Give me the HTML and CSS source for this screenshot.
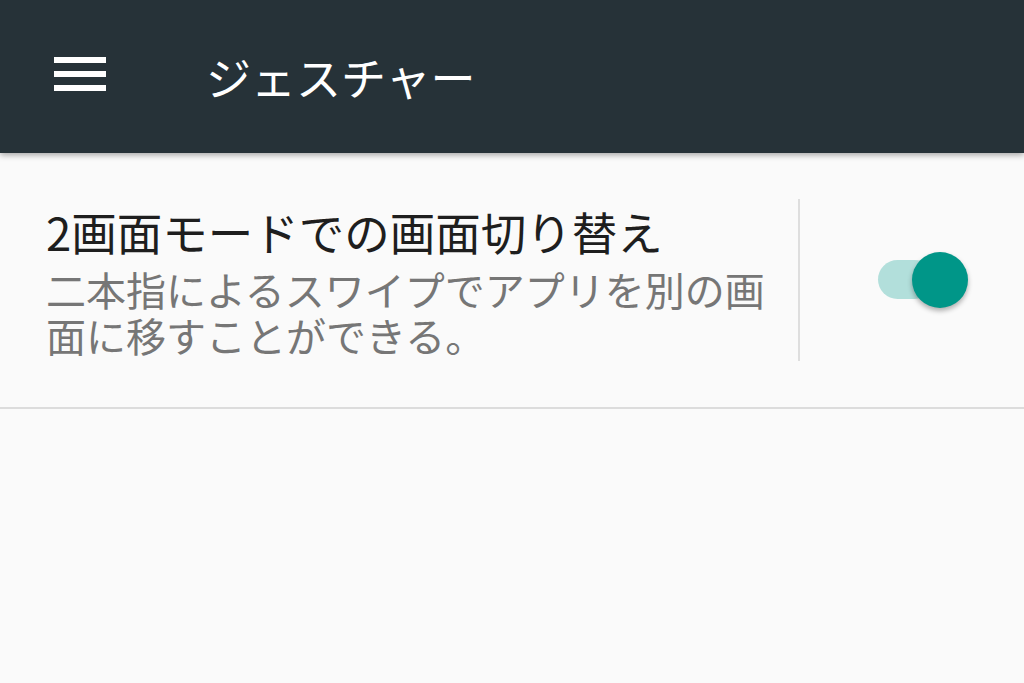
FILE: index.html
```html
<!DOCTYPE html>
<html lang="ja">
  <head>
    <meta charset="UTF-8" />
    <meta name="viewport" content="width=device-width, initial-scale=1.0" />
    <title>ジェスチャー</title>
    <link rel="stylesheet" href="styles.css">
  </head>
  <body>
    <!-- App Bar -->
    <header class="app-bar">
      <svg class="menu-icon" width="52" height="34" viewBox="0 0 52 34">
        <rect x="0" y="0" width="52" height="6" fill="#ffffff" />
        <rect x="0" y="14" width="52" height="6" fill="#ffffff" />
        <rect x="0" y="28" width="52" height="6" fill="#ffffff" />
      </svg>
      <h1 class="app-title">ジェスチャー</h1>
    </header>

    <!-- Setting Row -->
    <div class="setting-row">
      <div class="setting-text">
        <div class="setting-title">2画面モードでの画面切り替え</div>
        <div class="setting-summary">二本指によるスワイプでアプリを別の画面に移すことができる。</div>
      </div>
      <div class="divider"></div>
      <div class="switch-area">
        <div class="switch on">
          <span class="switch-track"></span>
          <span class="switch-thumb"></span>
        </div>
      </div>
    </div>
  </body>
</html>
```

FILE: styles.css
```css
/* Page */
body {
  margin: 0;
  background: #fafafa;
  font-family: "Noto Sans CJK JP", Roboto, "Noto Sans", sans-serif;
  color: #212121;
}

/* App Bar */
.app-bar {
  display: flex;
  align-items: center;
  height: 153px;
  padding-left: 54px;
  background-color: #263238;
  box-shadow: 0 2px 6px rgba(0, 0, 0, 0.35);
  position: relative;
  z-index: 1;
}

.menu-icon {
  display: block;
  margin-bottom: 5px;
}

.app-title {
  margin: 0 0 0 100px;
  font-size: 45px;
  font-weight: normal;
  color: #ffffff;
}

/* Setting Row */
.setting-row {
  display: flex;
  align-items: center;
  height: 254px;
  padding-left: 46px;
  border-bottom: 2px solid #dcdcdc;
}

.setting-text {
  width: 730px;
}

.setting-title {
  font-size: 45.5px;
  line-height: 56px;
  color: #1e1e1e;
  margin-bottom: 7px;
}

.setting-summary {
  font-size: 40px;
  line-height: 46px;
  color: #767676;
}

.divider {
  width: 2px;
  height: 162px;
  margin-left: 22px;
  background-color: #dedede;
}

/* Switch */
.switch-area {
  padding-left: 78px;
}

.switch {
  position: relative;
  width: 90px;
  height: 56px;
}

.switch-track {
  position: absolute;
  left: 0;
  top: 8px;
  width: 56px;
  height: 39px;
  border-radius: 20px;
  background-color: #b2dfdb;
}

.switch-thumb {
  position: absolute;
  right: 0;
  top: 0;
  width: 56px;
  height: 56px;
  border-radius: 50%;
  background-color: #009688;
  box-shadow: 0 3px 5px rgba(0, 0, 0, 0.3);
}
```
